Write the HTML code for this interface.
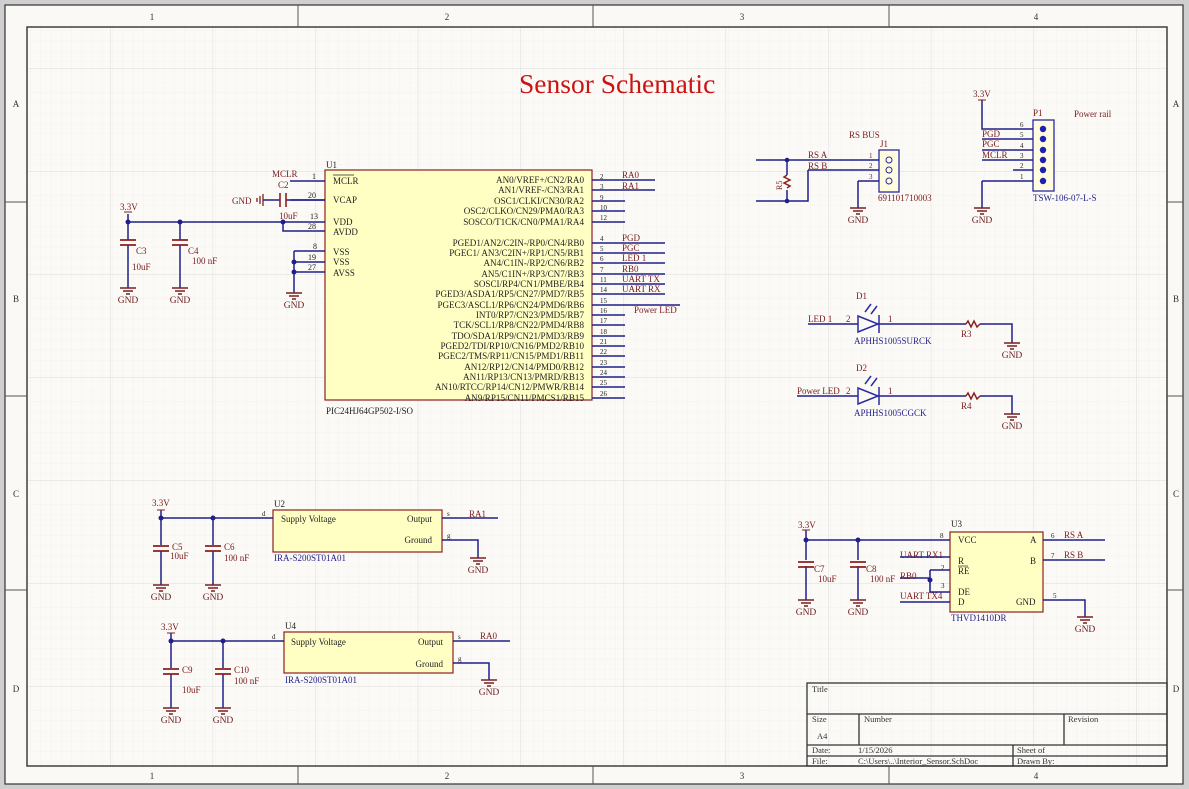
<!DOCTYPE html>
<html><head><meta charset="utf-8"><style>
html,body{margin:0;padding:0;background:#fff}
svg{display:block;font-family:"Liberation Serif",serif}
</style></head><body>
<svg width="1189" height="789" viewBox="0 0 1189 789" xmlns="http://www.w3.org/2000/svg">
<defs>
<pattern id="fine" x="0" y="0" width="10.26" height="10.3" patternUnits="userSpaceOnUse"><path d="M10.26 0V10.3M0 10.3H10.26" stroke="#eeeeec" stroke-width="0.6" fill="none"/></pattern>
<pattern id="major" x="110" y="68" width="102.6" height="103" patternUnits="userSpaceOnUse"><path d="M0 0V103M0 0H102.6" stroke="#dcdcda" stroke-width="1" fill="none"/></pattern>
<g id="gnd"><path d="M-8 0H8M-5 3H5M-2 6H2" stroke="#7a2020" stroke-width="1.4" fill="none"/><text x="0" y="15" font-size="9.5" fill="#6a1a1a" text-anchor="middle" stroke="none">GND</text></g>
<g id="capv" stroke="#8b2020" stroke-width="1.7" fill="none"><path d="M-8 0H8M-8 5H8"/></g>
</defs>
<rect width="1189" height="789" fill="#cfcfcf"/>
<rect x="5" y="5" width="1178" height="779" fill="#faf9f6" stroke="#333" stroke-width="1.2"/>
<rect x="27" y="27" width="1140" height="739" fill="#fbfaf7"/>
<rect x="27" y="27" width="1140" height="739" fill="url(#fine)"/>
<rect x="27" y="27" width="1140" height="739" fill="url(#major)"/>
<rect x="27" y="27" width="1140" height="739" fill="none" stroke="#333" stroke-width="1.4"/>
<g stroke="#555" stroke-width="1">
<path d="M298 5V27M593 5V27M889 5V27M298 766V784M593 766V784M889 766V784M5 202H27M5 396H27M5 590H27M1167 202H1183M1167 396H1183M1167 590H1183"/>
</g>
<g font-size="9" fill="#333" text-anchor="middle">
<text x="152" y="20">1</text><text x="447" y="20">2</text><text x="742" y="20">3</text><text x="1036" y="20">4</text>
<text x="152" y="779">1</text><text x="447" y="779">2</text><text x="742" y="779">3</text><text x="1036" y="779">4</text>
<text x="16" y="107">A</text><text x="16" y="302">B</text><text x="16" y="497">C</text><text x="16" y="692">D</text>
<text x="1176" y="107">A</text><text x="1176" y="302">B</text><text x="1176" y="497">C</text><text x="1176" y="692">D</text>
</g>
<text x="519" y="93" font-size="27.5" fill="#cc1414">Sensor Schematic</text>

<!-- U1 -->
<rect x="325" y="170" width="267" height="230" fill="#ffffc4" stroke="#8b2020" stroke-width="1.2"/>
<text x="326" y="168" font-size="9" fill="#222">U1</text>
<text x="326" y="414" font-size="9" fill="#222">PIC24HJ64GP502-I/SO</text>
<g stroke="#1f1f8a" stroke-width="1.5" fill="none">
<path d="M290 181H325M290 200H325M128 222H325M283 222V231H325M294 251H325M294 262H325M294 272H325M294 251V293"/>
<path d="M128 214V240M128 245V288M180 222V240M180 245V288"/>
<path d="M263 200H280M286 200H325"/>
<path d="M592 180H655M592 190H655M592 201H625M592 211H625M592 222H625"/>
<path d="M592 243H665M592 253H665M592 263H665M592 274H665M592 284H665M592 294H665M592 305H680M592 315H625M592 325H625M592 336H625M592 346H625M592 356H625M592 367H625M592 377H625M592 387H625M592 398H625"/>
</g>
<g fill="#1f1f8a"><circle cx="128" cy="222" r="2.5"/><circle cx="180" cy="222" r="2.5"/><circle cx="283" cy="222" r="2.5"/><circle cx="294" cy="262" r="2.5"/><circle cx="294" cy="272" r="2.5"/></g>
<use href="#capv" x="128" y="240"/><use href="#capv" x="180" y="240"/>
<path d="M280 193V207M286 193V207" stroke="#8b2020" stroke-width="1.6"/>
<path d="M263 194V206M260 196V204M257 198V202" stroke="#7a2020" stroke-width="1.3"/>
<use href="#gnd" x="128" y="288"/><use href="#gnd" x="180" y="288"/><use href="#gnd" x="294" y="293"/>
<path d="M124 212H132" stroke="#7a2020"/>
<g font-size="9" fill="#7a1a1a">
<text x="120" y="210">3.3V</text><text x="272" y="177">MCLR</text><text x="278" y="188">C2</text><text x="232" y="204">GND</text>
<text x="279" y="219">10uF</text><text x="136" y="254">C3</text><text x="132" y="270">10uF</text><text x="188" y="254">C4</text><text x="192" y="264">100 nF</text>
</g>
<g font-size="8" fill="#222">
<text x="312" y="179">1</text><text x="308" y="198">20</text><text x="310" y="219">13</text><text x="308" y="229">28</text><text x="313" y="249">8</text><text x="308" y="260">19</text><text x="308" y="270">27</text>
</g>
<g font-size="9" fill="#222">
<text x="333" y="184">MCLR</text><text x="333" y="203">VCAP</text><text x="333" y="225">VDD</text><text x="333" y="235">AVDD</text><text x="333" y="255">VSS</text><text x="333" y="265">VSS</text><text x="333" y="276">AVSS</text>
</g>
<path d="M333 175H354" stroke="#222" stroke-width="0.7"/>
<g font-size="9.1" fill="#222" text-anchor="end">
<text x="584" y="183">AN0/VREF+/CN2/RA0</text>
<text x="584" y="193">AN1/VREF-/CN3/RA1</text>
<text x="584" y="204">OSC1/CLKI/CN30/RA2</text>
<text x="584" y="214">OSC2/CLKO/CN29/PMA0/RA3</text>
<text x="584" y="225">SOSCO/T1CK/CN0/PMA1/RA4</text>
<text x="584" y="246">PGED1/AN2/C2IN-/RP0/CN4/RB0</text>
<text x="584" y="256">PGEC1/ AN3/C2IN+/RP1/CN5/RB1</text>
<text x="584" y="266">AN4/C1IN-/RP2/CN6/RB2</text>
<text x="584" y="277">AN5/C1IN+/RP3/CN7/RB3</text>
<text x="584" y="287">SOSCI/RP4/CN1/PMBE/RB4</text>
<text x="584" y="297">PGED3/ASDA1/RP5/CN27/PMD7/RB5</text>
<text x="584" y="308">PGEC3/ASCL1/RP6/CN24/PMD6/RB6</text>
<text x="584" y="318">INT0/RP7/CN23/PMD5/RB7</text>
<text x="584" y="328">TCK/SCL1/RP8/CN22/PMD4/RB8</text>
<text x="584" y="339">TDO/SDA1/RP9/CN21/PMD3/RB9</text>
<text x="584" y="349">PGED2/TDI/RP10/CN16/PMD2/RB10</text>
<text x="584" y="359">PGEC2/TMS/RP11/CN15/PMD1/RB11</text>
<text x="584" y="370">AN12/RP12/CN14/PMD0/RB12</text>
<text x="584" y="380">AN11/RP13/CN13/PMRD/RB13</text>
<text x="584" y="390">AN10/RTCC/RP14/CN12/PMWR/RB14</text>
<text x="584" y="401">AN9/RP15/CN11/PMCS1/RB15</text>
</g>
<g font-size="7" fill="#222">
<text x="600" y="179">2</text><text x="600" y="189">3</text><text x="600" y="200">9</text><text x="600" y="210">10</text><text x="600" y="220">12</text>
<text x="600" y="241">4</text><text x="600" y="251">5</text><text x="600" y="261">6</text><text x="600" y="272">7</text><text x="600" y="282">11</text><text x="600" y="292">14</text><text x="600" y="303">15</text><text x="600" y="313">16</text><text x="600" y="323">17</text><text x="600" y="334">18</text><text x="600" y="344">21</text><text x="600" y="354">22</text><text x="600" y="365">23</text><text x="600" y="375">24</text><text x="600" y="385">25</text><text x="600" y="396">26</text>
</g>
<g font-size="9" fill="#7a1a1a">
<text x="622" y="178">RA0</text><text x="622" y="189">RA1</text>
<text x="622" y="241">PGD</text><text x="622" y="251">PGC</text><text x="622" y="261">LED 1</text><text x="622" y="272">RB0</text><text x="622" y="282">UART TX</text><text x="622" y="292">UART RX</text><text x="634" y="313">Power LED</text>
</g>

<!-- RS BUS J1 -->
<rect x="879" y="150" width="20" height="42" fill="#fffce0" stroke="#2a2aa0" stroke-width="1.3"/>
<g fill="none" stroke="#2a2aa0"><circle cx="889" cy="160" r="3"/><circle cx="889" cy="170" r="3"/><circle cx="889" cy="181" r="3"/></g>
<g stroke="#1f1f8a" stroke-width="1.5" fill="none">
<path d="M756 160H879M808 170H879M756 201H808V170M787 160V175M787 190V201M858 181H879M858 181V208"/>
<path d="M787 175l-3 2l6 3l-6 3l6 3l-3 2" stroke="#8b2020"/>
</g>
<g fill="#1f1f8a"><circle cx="787" cy="160" r="2.3"/><circle cx="787" cy="201" r="2.3"/></g>
<use href="#gnd" x="858" y="208"/>
<g font-size="9" fill="#7a1a1a">
<text x="849" y="138">RS BUS</text><text x="880" y="147">J1</text><text x="808" y="158">RS A</text><text x="808" y="169">RS B</text><text x="878" y="201">691101710003</text>
<text x="869" y="158" font-size="7">1</text><text x="869" y="168" font-size="7">2</text><text x="869" y="179" font-size="7">3</text>
</g>
<text x="782" y="190" font-size="8" fill="#7a1a1a" transform="rotate(-90 782 190)">R5</text>

<!-- P1 -->
<rect x="1033" y="120" width="21" height="71" fill="#fffce0" stroke="#2a2aa0" stroke-width="1.3"/>
<g fill="#1f1fb0"><circle cx="1043" cy="129" r="3.2"/><circle cx="1043" cy="139" r="3.2"/><circle cx="1043" cy="150" r="3.2"/><circle cx="1043" cy="160" r="3.2"/><circle cx="1043" cy="170" r="3.2"/><circle cx="1043" cy="181" r="3.2"/></g>
<g stroke="#1f1f8a" stroke-width="1.5" fill="none">
<path d="M982 100V129H1033M982 139H1033M982 150H1033M982 160H1033M1013 170H1033M982 181H1033M982 181V208"/>
</g>
<path d="M978 100H986" stroke="#7a2020"/>
<use href="#gnd" x="982" y="208"/>
<g font-size="9" fill="#7a1a1a">
<text x="973" y="97">3.3V</text><text x="1033" y="116">P1</text><text x="1074" y="117">Power rail</text>
<text x="982" y="137">PGD</text><text x="982" y="147">PGC</text><text x="982" y="158">MCLR</text>
<text x="1033" y="201" fill="#1f1f8a">TSW-106-07-L-S</text>
</g>
<g font-size="7" fill="#222"><text x="1020" y="127">6</text><text x="1020" y="137">5</text><text x="1020" y="148">4</text><text x="1020" y="158">3</text><text x="1020" y="168">2</text><text x="1020" y="179">1</text></g>

<!-- D1 / D2 -->
<g stroke="#1f1f8a" stroke-width="1.5" fill="none">
<path d="M808 324H858M878 324H966M980 324H1012V343"/>
<path d="M797 396H858M878 396H966M980 396H1012V414"/>
<path d="M858 316V332L878 324Z M879 315V333 M858 388V404L878 396Z M879 387V405" stroke="#2a2aa0"/>
<path d="M865 312l6 -8M871 314l6 -8M865 384l6 -8M871 386l6 -8" stroke="#2a2aa0"/>
<path d="M966 324l2 -3l3 6l3 -6l3 6l3 -3M966 396l2 -3l3 6l3 -6l3 6l3 -3" stroke="#8b2020"/>
</g>
<use href="#gnd" x="1012" y="343"/><use href="#gnd" x="1012" y="414"/>
<g font-size="9" fill="#7a1a1a">
<text x="856" y="299">D1</text><text x="808" y="322">LED 1</text><text x="846" y="322">2</text><text x="888" y="322">1</text><text x="854" y="344" fill="#1f1f8a">APHHS1005SURCK</text><text x="961" y="337">R3</text>
<text x="856" y="371">D2</text><text x="797" y="394">Power LED</text><text x="846" y="394">2</text><text x="888" y="394">1</text><text x="854" y="416" fill="#1f1f8a">APHHS1005CGCK</text><text x="961" y="409">R4</text>
</g>

<!-- U3 -->
<rect x="950" y="532" width="93" height="80" fill="#ffffc4" stroke="#8b2020" stroke-width="1.2"/>
<g stroke="#1f1f8a" stroke-width="1.5" fill="none">
<path d="M806 530V560M806 566V600M858 540V560M858 566V600M806 540H950M900 557H950M930 570H950M900 578H930M930 570V592H950M900 602H950M1043 540H1105M1043 560H1105M1043 600H1085V617"/>
</g>
<g fill="#1f1f8a"><circle cx="806" cy="540" r="2.5"/><circle cx="858" cy="540" r="2.5"/><circle cx="930" cy="580" r="2.5"/></g>
<use href="#capv" x="806" y="562"/><use href="#capv" x="858" y="562"/>
<path d="M802 530H810" stroke="#7a2020"/>
<use href="#gnd" x="806" y="600"/><use href="#gnd" x="858" y="600"/><use href="#gnd" x="1085" y="617"/>
<g font-size="9" fill="#222">
<text x="951" y="527">U3</text><text x="958" y="543">VCC</text><text x="958" y="564">R</text><text x="958" y="574">RE</text><text x="958" y="595">DE</text><text x="958" y="605">D</text><text x="1030" y="543">A</text><text x="1030" y="564">B</text><text x="1016" y="605">GND</text>
<text x="951" y="621" fill="#1f1f8a">THVD1410DR</text>
</g>
<path d="M958 566H968" stroke="#222" stroke-width="0.7"/>
<g font-size="9" fill="#7a1a1a">
<text x="798" y="528">3.3V</text><text x="814" y="572">C7</text><text x="818" y="582">10uF</text><text x="866" y="572">C8</text><text x="870" y="582">100 nF</text>
<text x="900" y="558">UART RX1</text><text x="900" y="579">RB0</text><text x="900" y="599">UART TX4</text>
<text x="1064" y="538">RS A</text><text x="1064" y="558">RS B</text>
</g>
<g font-size="7" fill="#222"><text x="940" y="538">8</text><text x="941" y="570">2</text><text x="941" y="588">3</text><text x="1051" y="538">6</text><text x="1051" y="558">7</text><text x="1053" y="598">5</text></g>

<!-- U2 -->
<rect x="273" y="510" width="169" height="42" fill="#ffffc4" stroke="#8b2020" stroke-width="1.2"/>
<g stroke="#1f1f8a" stroke-width="1.5" fill="none">
<path d="M161 510V545M161 551V585M213 518V545M213 551V585M161 518H273M442 518H498M442 540H478V558"/>
</g>
<g fill="#1f1f8a"><circle cx="161" cy="518" r="2.5"/><circle cx="213" cy="518" r="2.5"/></g>
<use href="#capv" x="161" y="546"/><use href="#capv" x="213" y="546"/>
<path d="M157 510H165" stroke="#7a2020"/>
<use href="#gnd" x="161" y="585"/><use href="#gnd" x="213" y="585"/><use href="#gnd" x="478" y="558"/>
<g font-size="9" fill="#222"><text x="274" y="507">U2</text><text x="281" y="522">Supply Voltage</text><text x="432" y="522" text-anchor="end">Output</text><text x="432" y="543" text-anchor="end">Ground</text><text x="274" y="561" fill="#1f1f8a">IRA-S200ST01A01</text><text x="262" y="516" font-size="7">d</text><text x="447" y="516" font-size="7">s</text><text x="447" y="538" font-size="7">g</text></g>
<g font-size="9" fill="#7a1a1a"><text x="152" y="506">3.3V</text><text x="172" y="550">C5</text><text x="170" y="559">10uF</text><text x="224" y="550">C6</text><text x="224" y="561">100 nF</text><text x="469" y="517">RA1</text></g>

<!-- U4 -->
<rect x="284" y="632" width="169" height="41" fill="#ffffc4" stroke="#8b2020" stroke-width="1.2"/>
<g stroke="#1f1f8a" stroke-width="1.5" fill="none">
<path d="M171 633V668M171 674V708M223 641V668M223 674V708M171 641H284M453 641H510M453 663H489V680"/>
</g>
<g fill="#1f1f8a"><circle cx="171" cy="641" r="2.5"/><circle cx="223" cy="641" r="2.5"/></g>
<use href="#capv" x="171" y="669"/><use href="#capv" x="223" y="669"/>
<path d="M167 633H175" stroke="#7a2020"/>
<use href="#gnd" x="171" y="708"/><use href="#gnd" x="223" y="708"/><use href="#gnd" x="489" y="680"/>
<g font-size="9" fill="#222"><text x="285" y="629">U4</text><text x="291" y="645">Supply Voltage</text><text x="443" y="645" text-anchor="end">Output</text><text x="443" y="667" text-anchor="end">Ground</text><text x="285" y="683" fill="#1f1f8a">IRA-S200ST01A01</text><text x="272" y="639" font-size="7">d</text><text x="458" y="639" font-size="7">s</text><text x="458" y="661" font-size="7">g</text></g>
<g font-size="9" fill="#7a1a1a"><text x="161" y="630">3.3V</text><text x="182" y="673">C9</text><text x="182" y="693">10uF</text><text x="234" y="673">C10</text><text x="234" y="684">100 nF</text><text x="480" y="639">RA0</text></g>

<!-- Title block -->
<g fill="none" stroke="#333" stroke-width="1.3">
<rect x="807" y="683" width="360" height="83"/>
<path d="M807 714H1167M807 745H1167M807 756H1167M859 714V745M1064 714V745M1013 745V766"/>
</g>
<g font-size="8.5" fill="#333">
<text x="812" y="692">Title</text><text x="812" y="722">Size</text><text x="864" y="722">Number</text><text x="1068" y="722">Revision</text><text x="817" y="739">A4</text>
<text x="812" y="753">Date:</text><text x="858" y="753">1/15/2026</text><text x="1017" y="753">Sheet    of</text>
<text x="812" y="764">File:</text><text x="858" y="764">C:\Users\..\Interior_Sensor.SchDoc</text><text x="1017" y="764">Drawn By:</text>
</g>
</svg>
</body></html>
